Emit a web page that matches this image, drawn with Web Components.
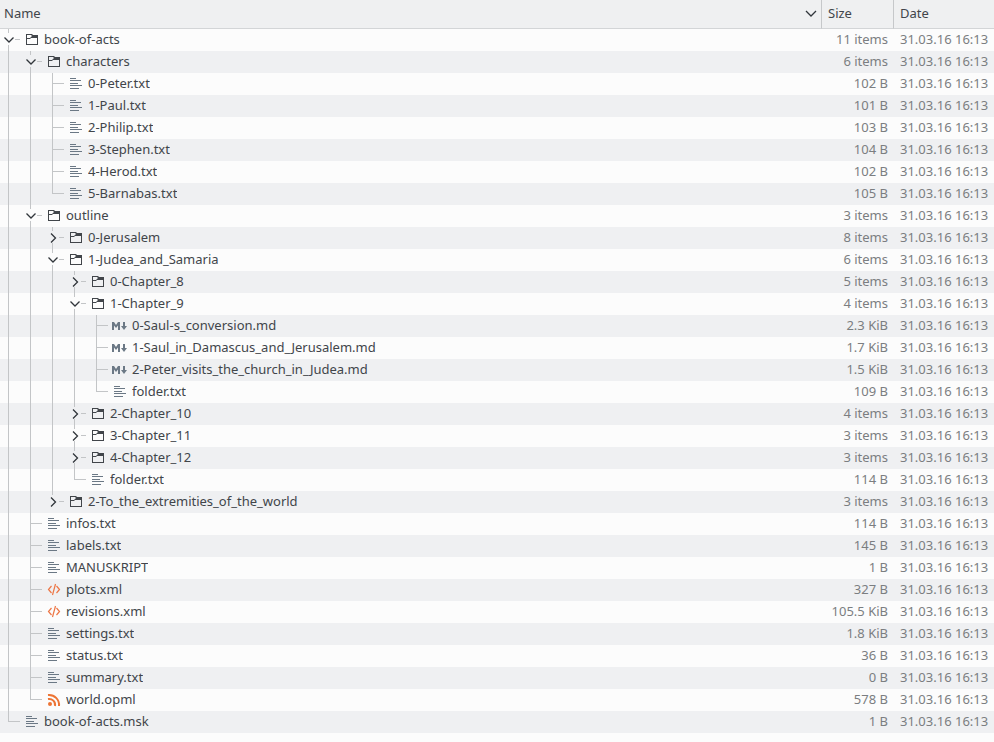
<!DOCTYPE html>
<html lang="en">
<head>
<meta charset="utf-8">
<title>book-of-acts</title>
<style>
  body {
    margin: 0;
    background: #fcfcfc;
    color: #41454a;
    font: 13px/20px "Noto Sans", "Open Sans", sans-serif;
  }
</style>
</head>
<body>
<file-tree></file-tree>

<script>
const icons = {
  folder: '<path fill="#41454a" fill-rule="evenodd" d="M2 2h6l1 1h5v10H2zM3 3v3h3l2-2-1-1zM3 7v5h10V6H7L6 7z"/>',
  text: '<path fill="#6b7885" d="M2 2h6v1H2zM2 4h11v1H2zM2 7h8v1H2zM2 9h12v1H2zM2 12h9v1H2z"/>',
  code: '<path fill="none" stroke="#ed7645" stroke-width="1.200" d="M5.500 4 2.500 7.500 5.500 11M10.500 4l3 3.500-3 3.500M9.500 2 6.500 13"/>',
  markdown: '<path fill="#6b7885" d="M0 4h2l2 3 2-3h2v8H6V7.500L4 10 2 7.500V12H0zM11 4h2v4h2l-3 4-3-4h2z"/>',
  feed: '<g fill="none" stroke="#ed7434" stroke-width="2"><path d="M2 3a10 10 0 0 1 11 11M2 7a6 6 0 0 1 7 7"/></g><circle cx="4" cy="12" r="2" fill="#ed7434"/>'
};

class FileIcon extends HTMLElement {

  constructor() {
    super();
    this.attachShadow({ mode: "open" });
  }

  connectedCallback() {
    this.shadowRoot.innerHTML = `
    <style>
      :host { display: block; flex: none; width: 16px; height: 16px; }
      svg { display: block; }
    </style>
    <svg width="16" height="16" viewBox="0 0 16 16" aria-hidden="true">${icons[this.getAttribute('kind')]}</svg>
    `;
  }
}

customElements.define("file-icon", FileIcon);


// one 22px cell of the connector lines: pass, blank, leaf or branch
class TreeGuide extends HTMLElement {

  constructor() {
    super();
    this.attachShadow({ mode: "open" });
  }

  connectedCallback() {
    const kind = this.getAttribute('kind');
    const last = this.hasAttribute('last');
    const open = this.hasAttribute('open');
    let lines = '';
    let arrow = '';
    if (kind === 'pass') {
      lines = 'M8.500 0V22';
    }
    if (kind === 'leaf') {
      lines = `M8.500 0V${last ? 11 : 22}M9 10.500H20`;
    }
    if (kind === 'branch') {
      lines = `M8.500 0V4${last ? '' : 'M8.500 16V22'}M15 10.500H20`;
      arrow = open ? 'M4.500 8.500 9 13 13.500 8.500' : 'M7 6.500 11.500 11 7 15.500';
    }
    const svg = `
    <svg width="22" height="22" viewBox="0 0 22 22" fill="none" aria-hidden="true">
      <path d="${lines}" stroke="#c3c5c7"/>
      <path d="${arrow}" stroke="#31363b" stroke-width="1.300"/>
    </svg>`;
    this.shadowRoot.innerHTML = `
    <style>
      :host { display: block; flex: none; width: 22px; height: 22px; }
      svg { display: block; }
      button { display: block; padding: 0; border: 0; background: none; cursor: pointer; }
    </style>
    ${kind === 'branch'
      ? `<button type="button" aria-expanded="${open}" aria-label="${this.getAttribute('label')}">${svg}</button>`
      : svg}
    `;
  }
}

customElements.define("tree-guide", TreeGuide);


class FileName extends HTMLElement {

  constructor() {
    super();
    this.attachShadow({ mode: "open" });
    this.shadowRoot.innerHTML = `
    <style>
      :host { display: flex; align-items: flex-start; height: 22px; }
      .icon { padding: 3px 4px 0 2px; }
      .label { white-space: nowrap; overflow: hidden; text-overflow: ellipsis; }
    </style>
    <slot name="guide"></slot>
    <span class="icon"><slot name="icon"></slot></span>
    <span class="label"><slot></slot></span>
    `;
  }
}

customElements.define("file-name", FileName);


const file = (name, size, kind = 'text') => ({ name, size, kind });
const folder = (name, size, children) => ({ name, size, kind: 'folder', open: !!children, children: children || [] });

const files = [
  folder('book-of-acts', '11 items', [
    folder('characters', '6 items', [
      file('0-Peter.txt', '102 B'),
      file('1-Paul.txt', '101 B'),
      file('2-Philip.txt', '103 B'),
      file('3-Stephen.txt', '104 B'),
      file('4-Herod.txt', '102 B'),
      file('5-Barnabas.txt', '105 B')
    ]),
    folder('outline', '3 items', [
      folder('0-Jerusalem', '8 items'),
      folder('1-Judea_and_Samaria', '6 items', [
        folder('0-Chapter_8', '5 items'),
        folder('1-Chapter_9', '4 items', [
          file('0-Saul-s_conversion.md', '2.3 KiB', 'markdown'),
          file('1-Saul_in_Damascus_and_Jerusalem.md', '1.7 KiB', 'markdown'),
          file('2-Peter_visits_the_church_in_Judea.md', '1.5 KiB', 'markdown'),
          file('folder.txt', '109 B')
        ]),
        folder('2-Chapter_10', '4 items'),
        folder('3-Chapter_11', '3 items'),
        folder('4-Chapter_12', '3 items'),
        file('folder.txt', '114 B')
      ]),
      folder('2-To_the_extremities_of_the_world', '3 items')
    ]),
    file('infos.txt', '114 B'),
    file('labels.txt', '145 B'),
    file('MANUSKRIPT', '1 B'),
    file('plots.xml', '327 B', 'code'),
    file('revisions.xml', '105.5 KiB', 'code'),
    file('settings.txt', '1.8 KiB'),
    file('status.txt', '36 B'),
    file('summary.txt', '0 B'),
    file('world.opml', '578 B', 'feed')
  ]),
  file('book-of-acts.msk', '1 B')
];

class FileTree extends HTMLElement {

  constructor() {
    super();
    this.attachShadow({ mode: "open" });
    this.shadowRoot.innerHTML = `
    <style>
      :host { display: block; }
      table { width: 100%; table-layout: fixed; border-spacing: 0; }
      th, td { box-sizing: border-box; padding: 0; text-align: left; font-weight: normal; white-space: nowrap; }
      th { height: 29px; padding-bottom: 2px; background: #eff0f1; border-bottom: 1px solid #d3d5d7; }
      th + th { border-left: 1px solid #c6c8ca; }
      .size { width: 72px; }
      .date { width: 101px; }
      th button {
        display: flex;
        align-items: center;
        justify-content: space-between;
        width: 100%;
        padding: 0 6px;
        border: 0;
        background: none;
        color: inherit;
        font: inherit;
      }
      th:first-child button { padding: 0 4px; }
      tbody tr:nth-child(even) { background: #eff0f2; }
      td { height: 22px; vertical-align: top; }
      td + td { padding-left: 7px; color: #7b7e81; }
      td.size { padding: 0 5px 0 0; text-align: right; }
    </style>
    <table>
      <thead>
        <tr>
          <th scope="col"><button type="button">Name
            <svg width="12" height="12" viewBox="0 0 12 12" fill="none" aria-hidden="true">
              <path d="M1 4 6 9 11 4" stroke="#31363b" stroke-width="1.300"/>
            </svg>
          </button></th>
          <th scope="col" class="size"><button type="button">Size</button></th>
          <th scope="col" class="date"><button type="button">Date</button></th>
        </tr>
      </thead>
      <tbody></tbody>
    </table>
    `;
    this._body = this.shadowRoot.querySelector("tbody");
    this._toggle = this._toggle.bind(this);
  }

  connectedCallback() {
    this._body.addEventListener("click", this._toggle);
    this.render();
  }

  disconnectedCallback() {
    this._body.removeEventListener("click", this._toggle);
  }

  _toggle(evt) {
    const guide = evt.target.closest('tree-guide[kind="branch"]');
    if (!guide) {
      return;
    }
    const item = this._rows[guide.closest("tr").rowIndex - 1];
    item.open = !item.open;
    this.render();
  }

  _row(item, parents, last) {
    const guides = parents.map(kind => `<tree-guide slot="guide" kind="${kind}"></tree-guide>`).join('');
    const kind = item.children ? 'branch' : 'leaf';
    return `
    <tr>
      <td><file-name>${guides}<tree-guide slot="guide" kind="${kind}" label="${item.name}"${last ? ' last' : ''}${item.open ? ' open' : ''}></tree-guide><file-icon slot="icon" kind="${item.kind}"></file-icon>${item.name}</file-name></td>
      <td class="size">${item.size}</td>
      <td>31.03.16 16:13</td>
    </tr>`;
  }

  _walk(items, parents) {
    return items.map((item, i) => {
      const last = i === items.length - 1;
      this._rows.push(item);
      let html = this._row(item, parents, last);
      if (item.open) {
        html += this._walk(item.children, [...parents, last ? 'blank' : 'pass']);
      }
      return html;
    }).join('');
  }

  render() {
    this._rows = [];
    this._body.innerHTML = this._walk(files, []);
  }
}

customElements.define("file-tree", FileTree);
</script>
</body>
</html>
